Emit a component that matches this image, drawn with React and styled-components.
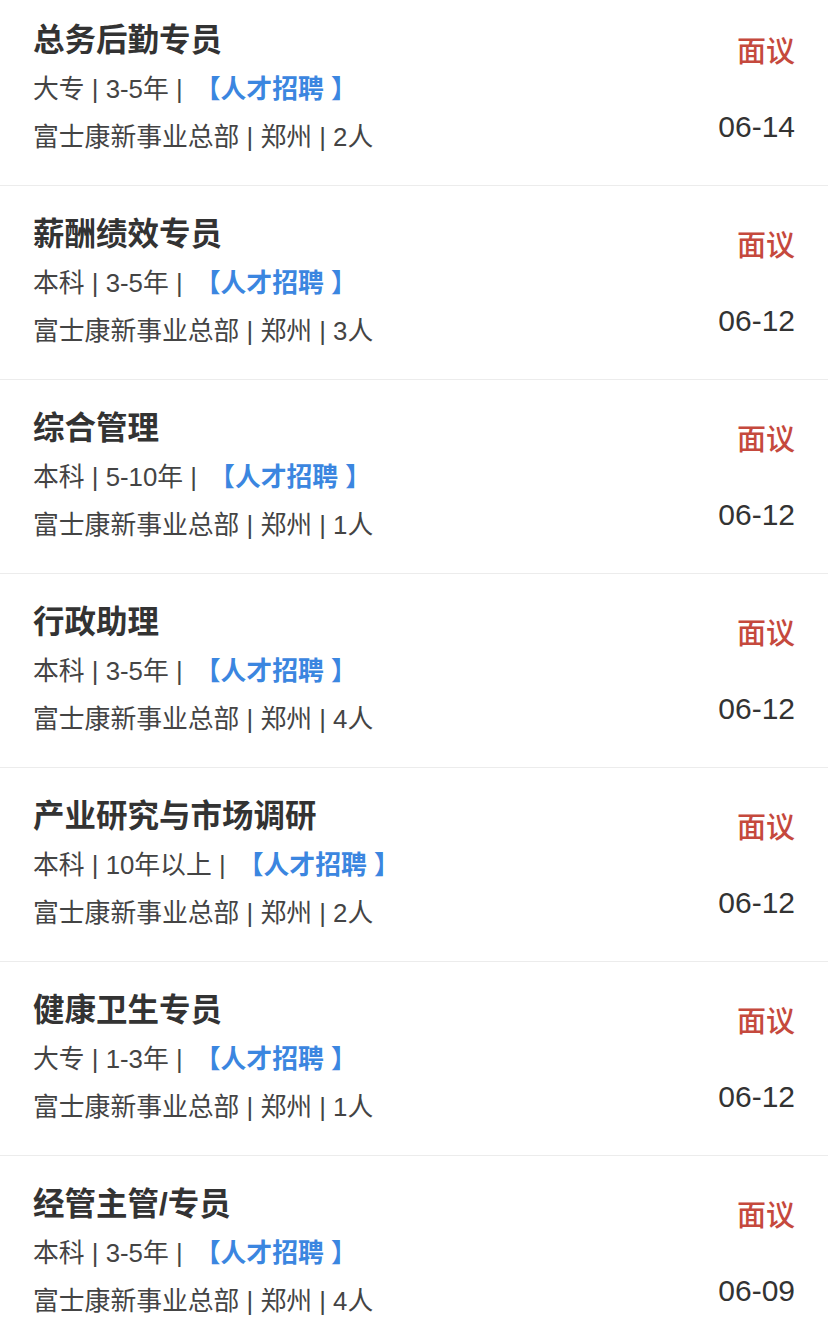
import styled, { createGlobalStyle } from "styled-components";

const GlobalStyle = createGlobalStyle`
  body {
    margin: 0;
    background: #fff;
    font-family: "Liberation Sans", "Noto Sans CJK SC", sans-serif;
  }
`;

const List = styled.ul`
  list-style: none;
  margin: -8px 0 0;
  padding: 0;
`;

const Item = styled.li`
  display: flex;
  justify-content: space-between;
  height: 193px;
  padding: 0 33px;
  border-bottom: 1px solid #ececec;
`;

const Info = styled.div`
  display: flex;
  flex-direction: column;
  padding-top: 23px;
`;

const Title = styled.h3`
  margin: 0;
  font-size: 31.5px;
  line-height: 50px;
  font-weight: bold;
  color: #333;
`;

const Line = styled.div`
  font-size: 25.8px;
  line-height: 48px;
  color: #444;
  white-space: pre;
`;

const Tag = styled.span`
  margin-left: 5px;
  color: #3b86e0;
  font-weight: bold;
`;

const Side = styled.div`
  display: flex;
  flex-direction: column;
  align-items: flex-end;
  padding-top: 40px;
`;

const Salary = styled.div`
  font-size: 29px;
  line-height: 40px;
  font-weight: 500;
  color: #c5493d;
`;

const Date = styled.div`
  margin-top: 35px;
  font-size: 30px;
  line-height: 40px;
  color: #333;
`;

const jobs = [
  { title: "总务后勤专员", edu: "大专", exp: "3-5年", num: 2, date: "06-14" },
  { title: "薪酬绩效专员", edu: "本科", exp: "3-5年", num: 3, date: "06-12" },
  { title: "综合管理", edu: "本科", exp: "5-10年", num: 1, date: "06-12" },
  { title: "行政助理", edu: "本科", exp: "3-5年", num: 4, date: "06-12" },
  { title: "产业研究与市场调研", edu: "本科", exp: "10年以上", num: 2, date: "06-12" },
  { title: "健康卫生专员", edu: "大专", exp: "1-3年", num: 1, date: "06-12" },
  { title: "经管主管/专员", edu: "本科", exp: "3-5年", num: 4, date: "06-09" },
];

export default function App() {
  return (
    <>
      <GlobalStyle />
      <List>
        {jobs.map((job, i) => (
          <Item key={i}>
            <Info>
              <Title>{job.title}</Title>
              <Line>
                {`${job.edu} | ${job.exp} | `}
                <Tag>【人才招聘 】</Tag>
              </Line>
              <Line>富士康新事业总部 | 郑州 | {job.num}人</Line>
            </Info>
            <Side>
              <Salary>面议</Salary>
              <Date>{job.date}</Date>
            </Side>
          </Item>
        ))}
      </List>
    </>
  );
}
